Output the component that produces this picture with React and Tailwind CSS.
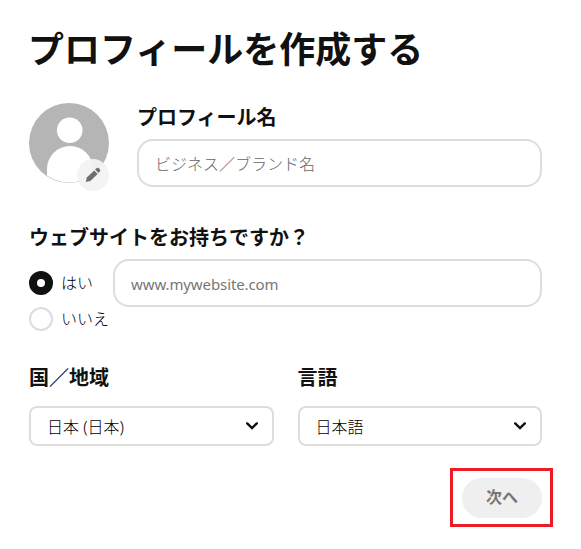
import { useState } from 'react';

const COUNTRIES = ['日本 (日本)'];
const LANGUAGES = ['日本語'];

function Avatar() {
  return (
    <div className="relative w-20 h-20 shrink-0">
      <svg viewBox="0 0 80 80" className="w-20 h-20">
        <defs>
          <clipPath id="avatar-clip">
            <circle cx="40" cy="40" r="39.4" />
          </clipPath>
        </defs>
        <circle cx="40" cy="40" r="40" fill="#b5b5b5" />
        <g clipPath="url(#avatar-clip)" fill="#fff">
          <circle cx="40.7" cy="27.3" r="12.8" />
          <path d="M18 80V66a23 23 0 0 1 46 0v14z" />
        </g>
      </svg>
      {/* Edit badge */}
      <button
        type="button"
        aria-label="edit"
        className="absolute left-12 top-14 w-8 h-8 rounded-full bg-[#f3f3f3]/95 flex items-center justify-center"
      >
        <svg viewBox="0 0 16 16" className="w-4 h-4" fill="#6f6f6f">
          <path d="M.9 15l.9-4.4 7.4-7.2 3.5 3.5-7.4 7.2z" />
          <path d="M10.1 2.6l.9-.9a2.4 2.4 0 0 1 3.4 3.4l-.9.9z" />
        </svg>
      </button>
    </div>
  );
}

function Radio({ label, checked, onChange }) {
  return (
    <label className="flex items-center h-6 gap-2 cursor-pointer whitespace-nowrap">
      <input type="radio" className="sr-only" checked={checked} onChange={onChange} />
      <span
        className={`w-6 h-6 shrink-0 rounded-full bg-white ${
          checked ? 'border-8 border-[#111]' : 'border-2 border-[#ddd]'
        }`}
      />
      <span className="text-base leading-6 font-light text-black">{label}</span>
    </label>
  );
}

function SelectField({ label, options }) {
  return (
    <div>
      <h2 className="text-xl leading-6 font-bold">{label}</h2>
      <button
        type="button"
        className="mt-4 w-full h-10 pl-4 pr-3.5 flex items-center justify-between rounded-lg border-2 border-[#ddd] bg-white"
      >
        <span className="pt-px text-base leading-6 font-light text-black">{options[0]}</span>
        <svg viewBox="0 0 12 8" className="w-3 h-2" fill="none" stroke="#111" strokeWidth="2.4">
          <path d="M1.2 1.4L6 6.1l4.8-4.7" strokeLinecap="round" />
        </svg>
      </button>
    </div>
  );
}

function App() {
  const [hasWebsite, setHasWebsite] = useState(true);

  return (
    <div className="h-[549px] bg-white text-[#111] pl-[29px] pr-[39px] pt-7 font-['Noto_Sans','Noto_Sans_CJK_JP',sans-serif]">
      <h1 className="-ml-px text-4xl leading-[44px] font-bold">プロフィールを作成する</h1>

      {/* Profile name */}
      <div className="mt-[31px] flex gap-7">
        <Avatar />
        <div className="flex-1 pt-[3px]">
          <h2 className="text-xl leading-6 font-bold">プロフィール名</h2>
          <input
            type="text"
            placeholder="ビジネス／ブランド名"
            className="mt-[9px] block w-full h-12 px-4 pt-0.5 rounded-2xl border-2 border-[#ddd] text-base font-light placeholder:text-[#666]"
          />
        </div>
      </div>

      {/* Website */}
      <h2 className="mt-[39px] text-xl leading-6 font-bold">ウェブサイトをお持ちですか？</h2>
      <div className="mt-[9px] flex h-[72px]">
        <div className="w-[84px] pt-3 flex flex-col gap-3">
          <Radio label="はい" checked={hasWebsite} onChange={() => setHasWebsite(true)} />
          <Radio label="いいえ" checked={!hasWebsite} onChange={() => setHasWebsite(false)} />
        </div>
        <input
          type="text"
          placeholder="www.mywebsite.com"
          className="flex-1 h-12 px-4 pt-0.5 rounded-2xl border-2 border-[#ddd] text-[15px] tracking-[-0.1px] placeholder:text-[#767676]"
        />
      </div>

      {/* Country and language */}
      <div className="mt-[35px] grid grid-cols-2 gap-6">
        <SelectField label="国／地域" options={COUNTRIES} />
        <SelectField label="言語" options={LANGUAGES} />
      </div>

      <div className="mt-8 flex justify-end">
        <div className="relative">
          <button
            type="button"
            className="w-20 h-10 pb-0.5 rounded-full bg-[#efefef] text-base font-bold text-[#767676]"
          >
            次へ
          </button>
          {/* Highlight frame */}
          <div className="absolute -left-3 -top-2.5 w-[103px] h-[59px] border-3 border-[#ed1c24] pointer-events-none" />
        </div>
      </div>
    </div>
  );
}

export default App;
